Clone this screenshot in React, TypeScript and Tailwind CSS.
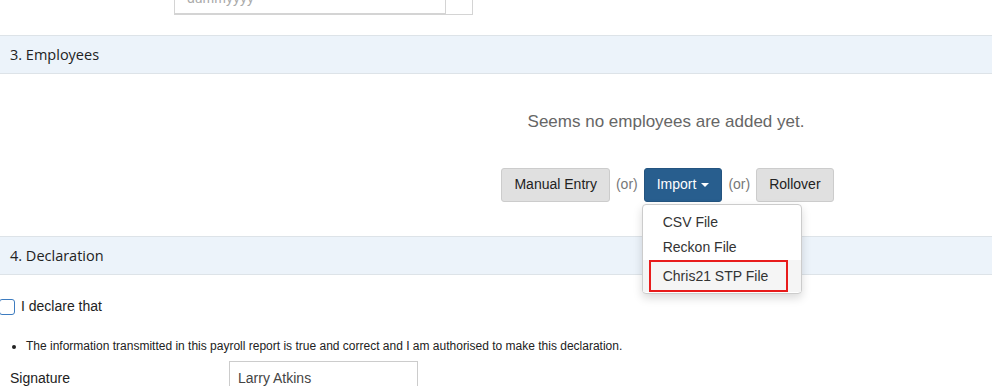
const SANS = "font-['Liberation_Sans',Arial,sans-serif]";
const HEAD = "font-['Open_Sans','Noto_Sans',sans-serif]";

function SectionHeader({ title }: { title: string }) {
  return (
    <div
      className={`flex h-[39px] items-center border-y border-[#dde3e8] bg-[#ecf3fa] pl-[10px] text-[14.5px] text-[#222] ${HEAD}`}
    >
      {title}
    </div>
  );
}

function Button({ label, primary = false }: { label: string; primary?: boolean }) {
  return (
    <button
      className={
        primary
          ? "flex h-[34px] items-center gap-[5px] rounded-[3px] border border-[#245480] bg-[#285e8e] px-[12px] text-[14px] text-white"
          : "flex h-[34px] items-center rounded-[3px] border border-[#cccccc] bg-[#e0e0e0] px-[12px] text-[14px] text-[#222]"
      }
    >
      {label}
      {primary && (
        <span className="mt-[1px] h-0 w-0 border-x-[4px] border-t-[4px] border-x-transparent border-t-white" />
      )}
    </button>
  );
}

export default function App() {
  return (
    <div className={`h-[386px] w-[992px] overflow-hidden bg-white ${SANS}`}>
      {/* top input, scrolled partly out of view */}
      <div className="ml-[174px] -mt-[20px] flex h-[35px] w-[299px]">
        <div className="flex flex-1 items-end border border-b-2 border-[#d4d4d4] bg-white px-[12px] pb-[8px] text-[14px] leading-none text-[#aaa]">
          dummyyyy
        </div>
        <div className="w-[27px] border border-l-0 border-[#d4d4d4]" />
      </div>

      <div className="h-[20px]" />

      <SectionHeader title="3. Employees" />

      <div className="flex h-[162px] flex-col items-center pl-[340px] pt-[35px]">
        <p className="text-[17px] text-[#666]">Seems no employees are added yet.</p>
        <div className="mt-[33px] flex items-center gap-[6px] pl-[3px] text-[14px]">
          <Button label="Manual Entry" />
          <span className="text-[#777]">(or)</span>
          <div className="relative">
            <Button label="Import" primary />
            <div className="absolute left-[-2px] top-[36px] z-10 w-[160px] rounded-[4px] border border-[#ccc] bg-white pb-[1px] pt-[5px] text-[14px] text-[#333] shadow-[0_4px_10px_rgba(0,0,0,0.15)]">
              <div className="px-[20px] leading-[25px]">CSV File</div>
              <div className="px-[20px] leading-[25px]">Reckon File</div>
              <div className="bg-[#f5f5f5] pl-[6px] pr-[13px]">
                <div className="border-2 border-[#e81c1c] px-[12px] leading-[28px]">Chris21 STP File</div>
              </div>
            </div>
          </div>
          <span className="text-[#777]">(or)</span>
          <Button label="Rollover" />
        </div>
      </div>

      <SectionHeader title="4. Declaration" />

      <div className="mt-[21px] flex items-center gap-[6px] text-[14px] text-[#222]">
        <span className="-ml-[1px] h-[16px] w-[16px] rounded-[3px] border border-[#3d7cc0]" />
        I declare that
      </div>

      <ul className="mt-[20px] list-disc pl-[26px] text-[12px] text-[#222]">
        <li>
          The information transmitted in this payroll report is true and correct and I am authorised to make this
          declaration.
        </li>
      </ul>

      <div className="mt-[6px] flex items-start text-[14px] text-[#222]">
        <span className="w-[229px] pl-[10px] pt-[7px]">Signature</span>
        <div className="h-[34px] w-[189px] border border-[#ccc] px-[8px] pt-[6px] text-[14px] text-[#444]">
          Larry Atkins
        </div>
      </div>
    </div>
  );
}
